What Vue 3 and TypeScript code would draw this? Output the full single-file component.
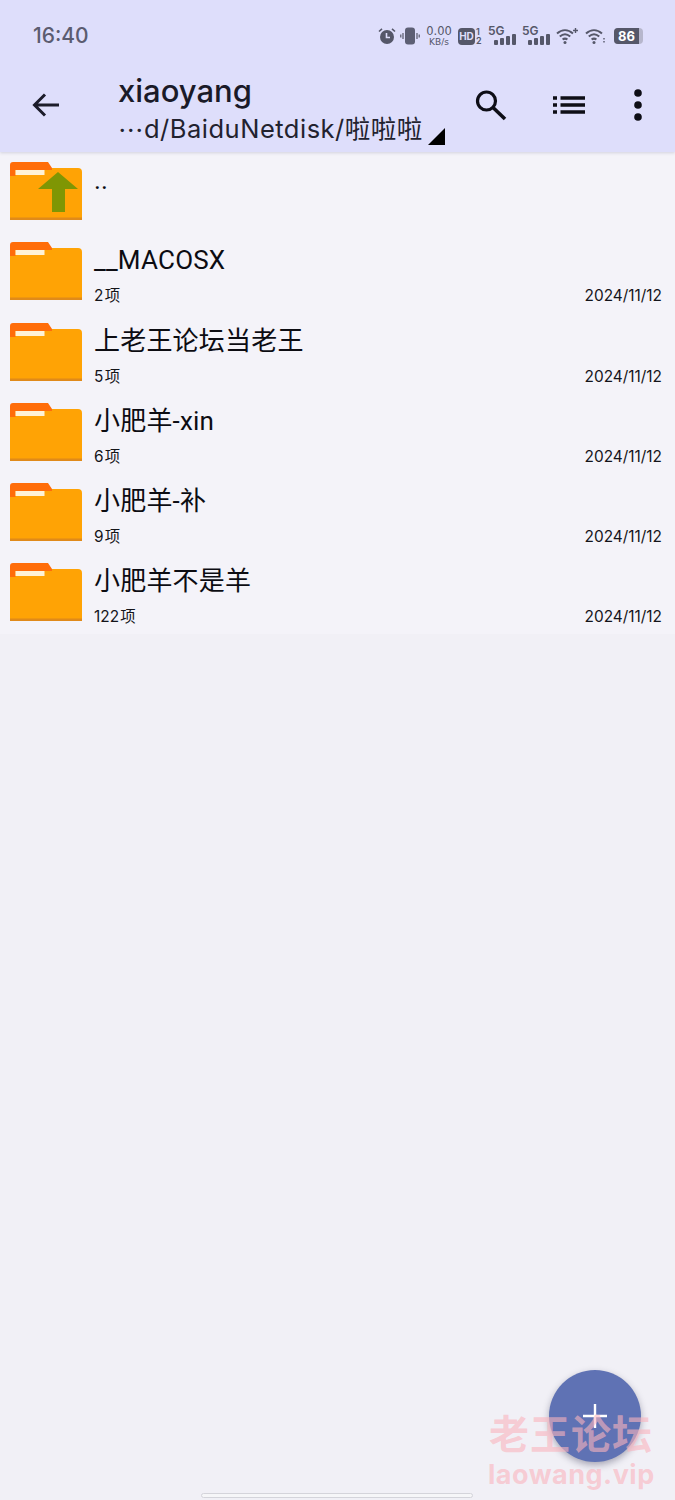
<script setup lang="ts">
interface Entry {
  name: string;
  count: string;
  date: string;
}

const entries: Entry[] = [
  { name: "__MACOSX", count: "2 项", date: "2024/11/12" },
  { name: "上老王论坛当老王", count: "5 项", date: "2024/11/12" },
  { name: "小肥羊-xin", count: "6 项", date: "2024/11/12" },
  { name: "小肥羊-补", count: "9 项", date: "2024/11/12" },
  { name: "小肥羊不是羊", count: "122 项", date: "2024/11/12" },
];

const signalBars = [5, 7, 9, 11];
</script>

<template>
  <div class="screen">
    <header class="appbar">
      <div class="status">
        <span class="time">16:40</span>
        <div class="status-icons">
          <svg class="ic-alarm" width="18" height="18" viewBox="0 0 18 18">
            <circle cx="9" cy="10" r="7" fill="#555769" />
            <path d="M8.500 6v4.500h3.500" fill="none" stroke="#dedefb" stroke-width="1.600" />
            <path d="M1 4.500 4 1.800M17 4.500 14 1.800" stroke="#555769" stroke-width="1.600" />
          </svg>
          <svg class="ic-vibrate" width="20" height="18" viewBox="0 0 20 18">
            <rect x="5" y="0.500" width="10" height="17" rx="3" fill="#5d5f74" />
            <path d="M3 6v6M0.800 7.500v3M17 6v6M19.200 7.500v3" stroke="#555769" stroke-width="1.200" />
          </svg>
          <div class="speed">
            <span class="speed-num">0.00</span>
            <span class="speed-unit">KB/s</span>
          </div>
          <div class="hd">
            <span class="hd-box">HD</span>
            <span class="hd-nums"><i>1</i><i>2</i></span>
          </div>
          <div v-for="n in 2" :key="n" class="signal">
            <span class="signal-label">5G</span>
            <div class="bars">
              <span v-for="h in signalBars" :key="h" class="bar" :style="{ height: h + 'px' }"></span>
            </div>
          </div>
          <svg class="ic-wifi" width="22" height="18" viewBox="0 0 22 18">
            <path d="M1 6.500c5-4.400 11-4.400 16 0M3.800 9.600c3.400-3 7-3 10.400 0M6.600 12.600c1.700-1.400 3.100-1.400 4.800 0" fill="none" stroke="#555769" stroke-width="2" />
            <circle cx="9" cy="15.500" r="1.500" fill="#555769" />
            <path d="M17 3.500h5M19.500 1v5" stroke="#555769" stroke-width="1.400" />
          </svg>
          <svg class="ic-wifi" width="22" height="18" viewBox="0 0 22 18">
            <path d="M1 6.500c5-4.400 11-4.400 16 0M3.800 9.600c3.400-3 7-3 10.400 0M6.600 12.600c1.700-1.400 3.100-1.400 4.800 0" fill="none" stroke="#555769" stroke-width="2" />
            <circle cx="9" cy="15.500" r="1.500" fill="#555769" />
            <path d="M19 11v1.500M19 14v1.500" stroke="#555769" stroke-width="1.400" />
          </svg>
          <div class="battery">
            <span class="battery-fill">86</span>
            <span class="battery-rest"></span>
          </div>
        </div>
      </div>

      <div class="toolbar">
        <button class="icon-btn back" aria-label="返回">
          <svg width="32" height="32" viewBox="0 0 32 32">
            <path d="M29 16H5M15 5.500 4.500 16 15 26.500" fill="none" stroke="#1c1c2a" stroke-width="3" />
          </svg>
        </button>
        <div class="titles">
          <div class="title">xiaoyang</div>
          <div class="path">
            <span class="dots">⋯</span><span>d/BaiduNetdisk/啦啦啦</span>
            <span class="corner"></span>
          </div>
        </div>
        <button class="icon-btn search" aria-label="搜索">
          <svg width="34" height="32" viewBox="0 0 34 32">
            <circle cx="12.500" cy="12" r="9" fill="none" stroke="#0e0e16" stroke-width="3.200" />
            <path d="M19 18.500 31 30" stroke="#0e0e16" stroke-width="3.600" />
          </svg>
        </button>
        <button class="icon-btn list" aria-label="列表">
          <svg width="32" height="18" viewBox="0 0 32 18">
            <path d="M0 2h4M0 9h4M0 16h4M7.500 2H32M7.500 9H32M7.500 16H32" stroke="#0e0e16" stroke-width="3.400" />
          </svg>
        </button>
        <button class="icon-btn more" aria-label="更多">
          <svg width="12" height="34" viewBox="0 0 12 34">
            <circle cx="6" cy="5" r="3.800" fill="#0e0e16" />
            <circle cx="6" cy="17" r="3.800" fill="#0e0e16" />
            <circle cx="6" cy="29" r="3.800" fill="#0e0e16" />
          </svg>
        </button>
      </div>
    </header>

    <main class="files">
      <div class="row">
        <svg class="folder" width="72" height="60" viewBox="0 0 72 60">
          <path d="M0 60V16h5.500L42 8h26a4 4 0 0 1 4 4v48z" fill="#ffa305" />
          <path d="M5 10h34v6H5z" fill="#ffa305" />
          <path d="M0 16V5a3 3 0 0 1 3-3h35l4 6v2H5.500v6z" fill="#ff6d0a" />
          <rect x="5.500" y="10" width="29" height="5" fill="#fff3d6" />
          <rect x="0" y="57.500" width="72" height="2.500" fill="#e08a1a" />
          <path d="M48 12 68 29H55V52H42V29H28z" fill="#7f9604" />
        </svg>
        <div class="info">
          <div class="name">..</div>
        </div>
      </div>
      <div v-for="e in entries" :key="e.name" class="row">
        <svg class="folder" width="72" height="60" viewBox="0 0 72 60">
          <path d="M0 60V16h5.500L42 8h26a4 4 0 0 1 4 4v48z" fill="#ffa305" />
          <path d="M5 10h34v6H5z" fill="#ffa305" />
          <path d="M0 16V5a3 3 0 0 1 3-3h35l4 6v2H5.500v6z" fill="#ff6d0a" />
          <rect x="5.500" y="10" width="29" height="5" fill="#fff3d6" />
          <rect x="0" y="57.500" width="72" height="2.500" fill="#e08a1a" />
        </svg>
        <div class="info">
          <div class="name">{{ e.name }}</div>
          <div class="meta">
            <span class="count">{{ e.count }}</span>
            <span>{{ e.date }}</span>
          </div>
        </div>
      </div>
    </main>

    <button class="fab" aria-label="新建">
      <svg width="24" height="24" viewBox="0 0 24 24">
        <path d="M12 0v24M0 12h24" stroke="#fff" stroke-width="2.400" />
      </svg>
    </button>

    <div class="watermark">
      <div class="wm-cn">老王论坛</div>
      <div class="wm-en">laowang.vip</div>
    </div>

    <div class="home-bar"></div>
  </div>
</template>

<style scoped>
.screen {
  position: relative;
  width: 675px;
  height: 1500px;
  overflow: hidden;
  background: #f1f0f6;
  font-family: Inter, "Noto Sans CJK SC", sans-serif;
  color: #0e0e16;
}

.appbar {
  height: 152px;
  box-sizing: border-box;
  background: #dedefb;
  box-shadow: 0 1px 3px rgba(60, 60, 100, 0.18);
  position: relative;
  z-index: 1;
}

.status {
  height: 70px;
  display: flex;
  align-items: flex-start;
  justify-content: space-between;
  padding: 22px 32px 0 33px;
  box-sizing: border-box;
}

.time {
  font-size: 21px;
  line-height: 26px;
  margin-top: 1px;
  font-weight: 500;
  color: #5b5c70;
}

.status-icons {
  display: flex;
  align-items: center;
  height: 28px;
  color: #555769;
}

.ic-alarm {
  margin-right: 4px;
}

.ic-vibrate {
  margin-right: 5px;
}

.speed {
  width: 28px;
  display: flex;
  flex-direction: column;
  align-items: center;
  font-family: "DejaVu Sans", sans-serif;
  margin-right: 5px;
}

.speed-num {
  font-size: 11.500px;
  line-height: 12px;
}

.speed-unit {
  font-size: 9px;
  line-height: 10px;
}

.hd {
  display: flex;
  align-items: center;
  width: 25px;
  margin-right: 5px;
}

.hd-box {
  background: #555769;
  color: #dedefb;
  border-radius: 4px;
  font-size: 10px;
  font-weight: 700;
  line-height: 17px;
  width: 17px;
  text-align: center;
}

.hd-nums {
  display: flex;
  flex-direction: column;
  font-size: 9px;
  line-height: 9px;
  font-weight: 600;
  margin-left: 1px;
}

.hd-nums i {
  font-style: normal;
}

.signal {
  position: relative;
  width: 28px;
  height: 22px;
  margin-right: 6px;
}

.signal-label {
  position: absolute;
  left: 0;
  top: -1px;
  font-size: 12px;
  line-height: 13px;
  font-weight: 600;
}

.bars {
  position: absolute;
  right: 0;
  bottom: 2px;
  display: flex;
  align-items: flex-end;
  gap: 2px;
}

.bar {
  width: 4px;
  background: #555769;
  border-radius: 1px;
}

.ic-wifi {
  margin-right: 7px;
}

.battery {
  display: flex;
  width: 29px;
  height: 16px;
  border-radius: 4px;
  overflow: hidden;
  background: #b6b6cc;
}

.battery-fill {
  width: 25px;
  background: #555769;
  color: #fff;
  font-size: 13px;
  line-height: 16px;
  font-weight: 700;
  text-align: center;
}

.toolbar {
  display: flex;
  align-items: center;
  height: 82px;
  padding-left: 30px;
}

.icon-btn {
  flex: none;
  border: none;
  background: none;
  padding: 0;
  margin-bottom: 12px;
  display: flex;
  align-items: center;
  justify-content: center;
}

.back {
  width: 32px;
  margin-right: 56px;
}

.titles {
  width: 356px;
  margin-top: -2px;
}

.title {
  font-size: 31px;
  line-height: 38px;
  font-weight: 500;
  color: #1a1a28;
}

.path {
  display: flex;
  align-items: flex-end;
  font-size: 25.500px;
  line-height: 38px;
  letter-spacing: 0.5px;
  color: #22222e;
}

.dots {
  width: 26px;
  font-family: "Noto Sans CJK SC", sans-serif;
  letter-spacing: 0;
}

.corner {
  width: 0;
  height: 0;
  margin: 0 0 3px 5px;
  border-left: 17px solid transparent;
  border-bottom: 17px solid #000;
}

.search {
  margin-right: 45px;
}

.list {
  margin-right: 47px;
}

.files {
  background: #f4f3f9;
}

.row {
  height: 80.250px;
  display: flex;
  box-sizing: border-box;
  padding: 8px 13px 0 10px;
}

.folder {
  flex: none;
  margin-right: 12px;
}

.info {
  flex: 1;
  min-width: 0;
}

.name {
  font-family: Roboto, "Noto Sans CJK SC", sans-serif;
  font-size: 26px;
  letter-spacing: 0.2px;
  line-height: 36px;
  margin-top: 2px;
  color: #0c0c12;
}

.meta {
  display: flex;
  justify-content: space-between;
  font-size: 15.400px;
  line-height: 20px;
  margin-top: 8px;
  color: #14141a;
}

.count {
  word-spacing: -3px;
}

.fab {
  position: absolute;
  left: 549px;
  top: 1370px;
  width: 92px;
  height: 92px;
  border: none;
  padding: 0;
  border-radius: 50%;
  background: #5f72b4;
  box-shadow: 0 3px 7px rgba(30, 30, 60, 0.35);
  display: flex;
  align-items: center;
  justify-content: center;
}

.watermark {
  position: absolute;
  left: 488px;
  top: 1414px;
  width: 166px;
  text-align: center;
  color: rgba(250, 180, 190, 0.62);
  font-weight: 700;
  font-family: Inter, "Noto Sans CJK SC", sans-serif;
}

.wm-cn {
  font-size: 40px;
  line-height: 42px;
  letter-spacing: 1px;
}

.wm-en {
  font-size: 27px;
  line-height: 30px;
  margin-top: 4px;
  letter-spacing: 0.5px;
}

.home-bar {
  position: absolute;
  left: 201px;
  top: 1493px;
  width: 272px;
  height: 5px;
  box-sizing: border-box;
  background: #f6f6f8;
  border: 1px solid #d4d4da;
  border-radius: 3px;
}
</style>
<style>
html,
body {
  margin: 0;
  background: #f1f0f6;
}
</style>
